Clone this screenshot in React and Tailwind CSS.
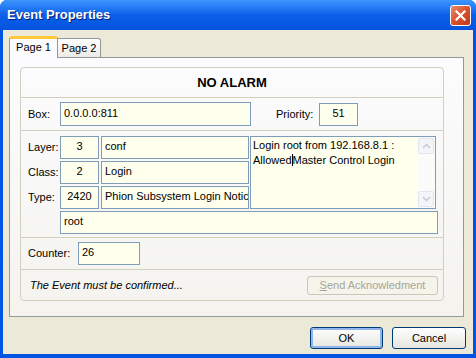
import React from 'react';

const ui = { fontFamily: '"Liberation Sans", Arial, sans-serif' };

function Field({ className = '', children }) {
    return (
        <div className={`border border-[#7F9DB9] bg-[#FFFFEE] text-[11px] text-black px-[3px] leading-[18px] overflow-hidden whitespace-nowrap ${className}`}>
            {children}
        </div>
    );
}

function ScrollArrow({ up }) {
    return (
        <div className="w-[16px] h-[16px] rounded-[2px] border border-[#E3E6EE] bg-[#F4F5F8] flex items-center justify-center">
            <svg width="9" height="6" viewBox="0 0 9 6">
                <path d={up ? 'M1 5 L4.5 1.5 L8 5' : 'M1 1 L4.5 4.5 L8 1'} fill="none" stroke="#C9CDDA" strokeWidth="1.6" />
            </svg>
        </div>
    );
}

export default function App() {
    return (
        <div className="w-[476px] h-[358px] flex flex-col bg-[#0054E3] rounded-t-[7px] overflow-hidden" style={ui}>
            {/* title bar */}
            <div className="h-[30px] shrink-0 flex items-center justify-between pl-[7px] pr-[5px] bg-gradient-to-b from-[#3D95FF] via-[#0A5FE8] to-[#0553DD]">
                <span className="text-white font-bold text-[13px] [text-shadow:1px_1px_0_#0A1E78]">Event Properties</span>
                <div className="w-[21px] h-[21px] rounded-[3px] border border-white bg-gradient-to-br from-[#E78A6C] via-[#D9502C] to-[#C2381A] flex items-center justify-center">
                    <svg width="11" height="11" viewBox="0 0 11 11">
                        <path d="M1.5 1.5 L9.5 9.5 M9.5 1.5 L1.5 9.5" stroke="white" strokeWidth="2.2" strokeLinecap="square" />
                    </svg>
                </div>
            </div>

            {/* body */}
            <div className="flex-1 mx-[3px] mb-[4px] bg-[#ECE9D8] flex flex-col pl-[6px] pr-[9px] pt-[5px]">
                {/* tabs */}
                <div className="flex items-end h-[22px] text-[11px] text-black">
                    <div className="relative z-10 w-[49px] h-[22px] mb-[-1px] bg-[#FCFCFE] border border-b-0 border-[#919B9C] border-t-[3px] border-t-[#FFC83C] rounded-t-[3px] flex items-center justify-center pb-[2px]">Page 1</div>
                    <div className="w-[43px] h-[19px] bg-gradient-to-b from-white to-[#ECEBE6] border border-l-0 border-b-0 border-[#919B9C] rounded-tr-[3px] flex items-center justify-center">Page 2</div>
                </div>

                {/* tab page */}
                <div className="h-[260px] border border-[#919B9C] bg-gradient-to-b from-[#FCFCFE] to-[#F4F3EE] pt-[9px] pl-[10px] pr-[19px]">
                    <div className="h-[234px] border border-[#D0D0BF] rounded-[4px] flex flex-col text-[11px] text-black">
                        <div className="h-[30px] flex items-center justify-center font-bold text-[13px] border-b border-[#D0D0BF]">NO ALARM</div>

                        <div className="h-[33px] flex items-center border-b border-[#D0D0BF]">
                            <span className="w-[39px] pl-[7px]">Box:</span>
                            <Field className="w-[191px] h-[24px] leading-[20px]">0.0.0.0:811</Field>
                            <span className="ml-[25px] w-[43px]">Priority:</span>
                            <Field className="w-[39px] h-[23px] leading-[19px] text-center">51</Field>
                        </div>

                        <div className="h-[107px] flex flex-col pt-[5px] border-b border-[#D0D0BF]">
                            <div className="flex gap-[1px]">
                                <div className="flex flex-col gap-[2px]">
                                    {[['Layer:', '3', 'conf'], ['Class:', '2', 'Login'], ['Type:', '2420', 'Phion Subsystem Login Notic']].map(([l, n, t]) => (
                                        <div key={l} className="flex items-center h-[23px]">
                                            <span className="w-[39px] pl-[7px]">{l}</span>
                                            <Field className="w-[39px] h-[23px] text-center">{n}</Field>
                                            <Field className="ml-[2px] w-[148px] h-[23px]">{t}</Field>
                                        </div>
                                    ))}
                                </div>
                                <div className="w-[186px] h-[73px] border border-[#7F9DB9] bg-[#FFFFEE] flex">
                                    <div className="flex-1 pl-[2px] pt-[1px] leading-[15px] text-[11px]">
                                        Login root from 192.168.8.1 :<br />
                                        Allowed<span className="inline-block w-px h-[12px] bg-black align-[-2px]" />Master Control Login
                                    </div>
                                    <div className="w-[17px] bg-[#FBFBF9] flex flex-col justify-between py-px">
                                        <ScrollArrow up />
                                        <ScrollArrow />
                                    </div>
                                </div>
                            </div>
                            <Field className="ml-[39px] mt-[2px] w-[378px] h-[23px]">root</Field>
                        </div>

                        <div className="h-[32px] flex items-center border-b border-[#D0D0BF]">
                            <span className="w-[57px] pl-[7px]">Counter:</span>
                            <Field className="w-[62px] h-[23px] leading-[16px]">26</Field>
                        </div>

                        <div className="flex-1 flex items-center justify-between pl-[9px] pr-[5px]">
                            <span className="italic text-[11px]">The Event must be confirmed...</span>
                            <div className="w-[131px] h-[19px] rounded-[3px] border border-[#C9C7BA] bg-[#F5F4EA] text-[#A6A598] flex items-center justify-center">
                                <span><span className="underline">S</span>end Acknowledment</span>
                            </div>
                        </div>
                    </div>
                </div>

                {/* buttons */}
                <div className="flex justify-end gap-[9px] mt-[10px] mr-[-2px] text-[11px] text-black">
                    <div className="w-[73px] h-[22px] rounded-[3px] border border-[#003C74] bg-gradient-to-b from-white to-[#E6E5DE] flex items-center justify-center shadow-[inset_0_0_0_2px_#90B4EE]">OK</div>
                    <div className="w-[74px] h-[22px] rounded-[3px] border border-[#003C74] bg-gradient-to-b from-white to-[#E6E5DE] flex items-center justify-center">Cancel</div>
                </div>
            </div>
        </div>
    );
}
